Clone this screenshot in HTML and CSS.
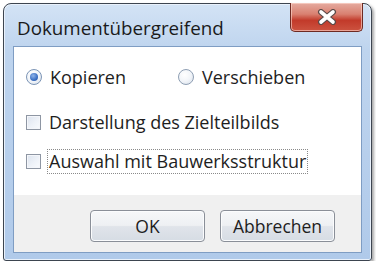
FILE: index.html
```html
<!DOCTYPE html>
<html lang="de">
<head>
<meta charset="utf-8">
<title>Dokumentübergreifend</title>
<link rel="stylesheet" href="styles.css">
</head>
<body>
<div class="window">
  <div class="titlebar">
    <span class="title">Dokumentübergreifend</span>
    <div class="close">
      <svg width="22" height="16" viewBox="0 0 22 16">
        <path d="M5 3 L17 13 M17 3 L5 13" stroke="#5a4a48" stroke-width="6" stroke-linecap="round"/>
        <path d="M5 3 L17 13 M17 3 L5 13" stroke="#ffffff" stroke-width="3.6" stroke-linecap="round"/>
      </svg>
    </div>
  </div>
  <div class="client">
    <div class="content">
      <div class="row radios">
        <label class="opt"><span class="radio checked"><span class="dot"></span></span>Kopieren</label>
        <label class="opt"><span class="radio"></span>Verschieben</label>
      </div>
      <div class="row check1">
        <label class="opt"><span class="box"></span>Darstellung des Zielteilbilds</label>
      </div>
      <div class="row check2">
        <label class="opt"><span class="box"></span><span class="focus">Auswahl mit Bauwerksstruktur</span></label>
      </div>
    </div>
    <div class="footer">
      <button class="btn">OK</button>
      <button class="btn">Abbrechen</button>
    </div>
  </div>
</div>
</body>
</html>
```
FILE: styles.css
```css
html, body {
  margin: 0;
  padding: 0;
  background: #ffffff;
}
body {
  font-family: "Open Sans", "Noto Sans", "DejaVu Sans", sans-serif;
  color: #1e1e1e;
}
.window {
  margin: 3px 0 0 3px;
  width: 369px;
  height: 258px;
  box-sizing: border-box;
  border: 1px solid #3d4550;
  border-radius: 8px 8px 3px 3px;
  background: linear-gradient(180deg, #d3e3f5 0%, #bed4ee 18%, #b0caea 100%);
  box-shadow: inset 0 0 0 1px #e9f1fb, 2px 2px 3px rgba(0,0,0,0.35);
  padding: 0 9px 7px 9px;
  display: flex;
  flex-direction: column;
}
.titlebar {
  height: 42px;
  display: flex;
  justify-content: space-between;
  align-items: flex-start;
}
.title {
  margin: 11px 0 0 4px;
  font-size: 18.8px;
  line-height: 26px;
  color: #1a1a1a;
}
.close {
  width: 73px;
  height: 29px;
  margin: -1px -1px 0 0;
  box-sizing: border-box;
  border: 1px solid #6e2a22;
  border-top: none;
  border-radius: 0 0 5px 5px;
  background: linear-gradient(180deg, #e5aba0 0%, #d98070 40%, #c23a2a 62%, #cc5340 100%);
  box-shadow: inset 0 0 0 1px rgba(255,220,210,0.6);
  display: flex;
  align-items: center;
  justify-content: center;
}
.client {
  flex: 1;
  background: #ffffff;
  border: 1px solid #7f9dc3;
  display: flex;
  flex-direction: column;
}
.content {
  flex: 1;
  padding: 0 0 0 12px;
  display: flex;
  flex-direction: column;
}
.row {
  display: flex;
  align-items: center;
  height: 24px;
}
.radios { margin-top: 18px; gap: 52px; }
.check1 { margin-top: 21px; }
.check2 { margin-top: 15px; }
.opt {
  display: flex;
  align-items: center;
  font-size: 18px;
  line-height: 24px;
  color: #1e1e1e;
}
.radio {
  width: 16px;
  height: 16px;
  border-radius: 50%;
  border: 1px solid #8e9eb3;
  background: radial-gradient(circle at 40% 35%, #ffffff 0%, #f2f5f9 50%, #d5dde8 100%);
  margin-right: 8px;
  display: flex;
  align-items: center;
  justify-content: center;
  box-sizing: border-box;
  flex: none;
}
.radio.checked { border-color: #7c95b6; }
.dot {
  width: 8px;
  height: 8px;
  border-radius: 50%;
  background: radial-gradient(circle at 40% 35%, #8fb4ea 0%, #3b6fc2 60%, #2a55a0 100%);
}
.box {
  width: 15px;
  height: 15px;
  box-sizing: border-box;
  border: 1px solid #8e96a3;
  background: linear-gradient(135deg, #dce3ee 0%, #eef2f8 55%, #f9fbfd 100%);
  box-shadow: inset 0 0 0 1px #f4f6fa;
  margin-right: 8px;
  flex: none;
}
.focus {
  border: 1px dotted #8a8a8a;
  padding: 0 1px 1px 1px;
  margin-left: -2px;
  line-height: 22px;
}
.footer {
  height: 57px;
  background: #f0f0f0;
  display: flex;
  justify-content: flex-end;
  align-items: center;
  gap: 15px;
  padding-right: 26px;
}
.btn {
  width: 115px;
  height: 32px;
  font-family: "Open Sans", "Noto Sans", "DejaVu Sans", sans-serif;
  font-size: 17.5px;
  color: #1e1e1e;
  border: 1px solid #8a8f98;
  border-radius: 4px;
  background: linear-gradient(180deg, #f6f7f9 0%, #eef0f3 48%, #e0e4ea 52%, #d6dce4 100%);
  box-shadow: inset 0 0 0 1px #fbfcfd;
  padding: 0;
  margin-top: 4px;
}
```
